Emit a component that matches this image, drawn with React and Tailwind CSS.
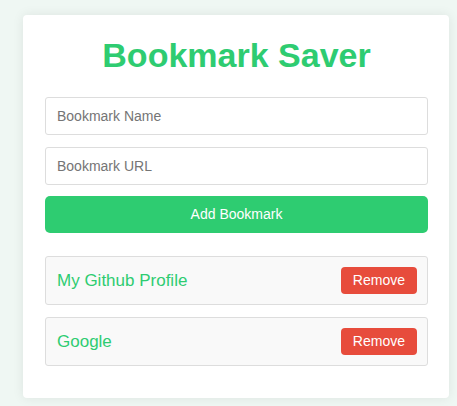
export default function App() {
  const items = ["My Github Profile", "Google"];
  return (
    <div className="min-h-screen w-full bg-[#eff7f3] pt-[15px] pl-[23px]" style={{ fontFamily: '"Liberation Sans", Arial, sans-serif' }}>
      <div className="w-[426px] bg-white rounded-[4px] shadow-[0_0_12px_rgba(0,0,0,0.08)] pl-[22px] pr-[21px] pt-[20px] pb-[32px]">
        <h1 className="text-center text-[34px] leading-[40px] font-bold text-[#2ecc71] mb-[22px]">Bookmark Saver</h1>
        <div className="flex flex-col">
          <input
            className="h-[38px] w-full border border-[#dddddd] rounded-[3px] px-[11px] text-[14px] text-[#333] placeholder:text-[#757575] outline-none"
            placeholder="Bookmark Name"
          />
          <input
            className="mt-[12px] h-[38px] w-full border border-[#dddddd] rounded-[3px] px-[11px] text-[14px] text-[#333] placeholder:text-[#757575] outline-none"
            placeholder="Bookmark URL"
          />
          <button className="mt-[11px] h-[37px] w-full bg-[#2ecc71] text-white text-[14px] rounded-[5px]">Add Bookmark</button>
        </div>
        <ul className="mt-[23px] flex flex-col gap-[12px]">
          {items.map((name) => (
            <li key={name} className="h-[49px] flex items-center justify-between bg-[#f9f9f9] border border-[#dddddd] rounded-[3px] pl-[11px] pr-[10px]">
              <span className="text-[17px] text-[#2ecc71]">{name}</span>
              <button className="h-[27px] px-[12px] bg-[#e74c3c] text-white text-[14px] rounded-[4px]">Remove</button>
            </li>
          ))}
        </ul>
      </div>
    </div>
  );
}
